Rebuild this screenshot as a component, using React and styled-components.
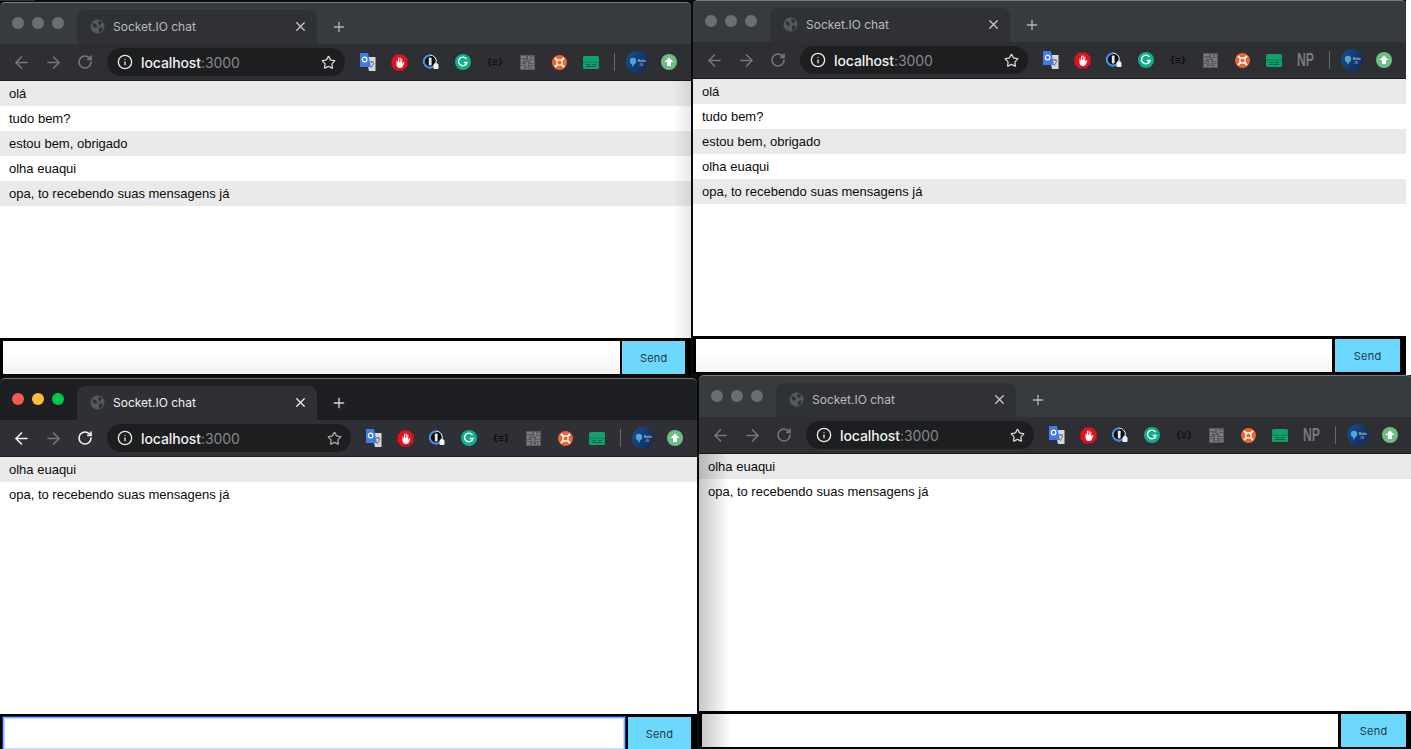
import React from "react";
import styled, { createGlobalStyle } from "styled-components";
import { ArrowLeft, ArrowRight, RotateCw, Info, Star, Plus, X } from "lucide-react";

const Global = createGlobalStyle`
  html, body { margin: 0; padding: 0; background: #0b0b0b; overflow: hidden; }
  * { box-sizing: border-box; }
`;

const Desktop = styled.div`
  position: relative;
  width: 1411px;
  height: 749px;
  overflow: hidden;
  background: #0b0b0b;
  font-family: "Liberation Sans", Arial, sans-serif;
`;

const Speck = styled.div`
  position: absolute;
  left: 0;
  top: 0;
  width: 35px;
  height: 1px;
  background: #333;
`;

const Gutter = styled.div`
  position: absolute;
  right: 0;
  top: 0;
  width: 5px;
  height: 375px;
  background: #fff;
`;

const Frame = styled.section`
  position: absolute;
  left: ${(p) => p.$x}px;
  top: ${(p) => p.$y}px;
  width: ${(p) => p.$w}px;
  display: flex;
  flex-direction: column;
`;

const TabBar = styled.header`
  height: 42px;
  display: flex;
  align-items: flex-end;
  padding-left: 77px;
  position: relative;
  border-radius: 5px 5px 0 0;
  border-top: 1px solid ${(p) => (p.$active ? "#6d6e70" : "#77797b")};
  background: ${(p) => (p.$active ? "#1e1f22" : "#383b3e")};
`;

const Lights = styled.div`
  position: absolute;
  left: 12px;
  top: 14px;
  display: flex;
  gap: 8px;
`;

const Light = styled.span`
  width: 12px;
  height: 12px;
  border-radius: 50%;
  background: ${(p) => p.$color};
`;

const Tab = styled.div`
  width: 240px;
  height: 34px;
  display: flex;
  align-items: center;
  padding: 0 9px 2px 13px;
  border-radius: 8px 8px 0 0;
  background: ${(p) => (p.$active ? "#2e3035" : "#2f3134")};
`;

const TabTitle = styled.span`
  flex: 1;
  margin-left: 8px;
  font-family: Inter, "Liberation Sans", sans-serif;
  font-size: 12px;
  white-space: nowrap;
  color: ${(p) => (p.$active ? "#f1f2f3" : "#b9bbbd")};
`;

const NewTab = styled.div`
  width: 44px;
  height: 34px;
  display: flex;
  align-items: center;
  justify-content: center;
  color: ${(p) => (p.$active ? "#d5d6d7" : "#b0b2b4")};
`;

const Toolbar = styled.div`
  height: 37px;
  display: flex;
  align-items: center;
  padding: 0 6px 0 5px;
  background: ${(p) => (p.$active ? "#2e3035" : "#2d2f32")};
  border-bottom: 1px solid #17181a;
`;

const NavButton = styled.div`
  width: 32px;
  height: 28px;
  display: flex;
  align-items: center;
  justify-content: center;
  color: ${(p) => p.$color};
`;

const Omnibox = styled.div`
  flex: 1;
  height: 28px;
  margin: 0 6px 0 6px;
  padding: 0 9px 0 10px;
  border-radius: 14px;
  display: flex;
  align-items: center;
  background: #1d1e20;
  color: #e8e9ea;
`;

const Url = styled.span`
  flex: 1;
  margin-left: 8px;
  font-family: Inter, "Liberation Sans", sans-serif;
  font-size: 14px;
  font-weight: 500;
  color: #f0f1f2;
  white-space: nowrap;
  letter-spacing: -0.1px;
`;

const Port = styled.span`
  font-weight: 400;
  color: #85878a;
`;

const Extensions = styled.div`
  display: flex;
  align-items: center;
`;

const Ext = styled.div`
  width: 32px;
  height: 28px;
  display: flex;
  align-items: center;
  justify-content: center;
`;

const Divider = styled.div`
  width: 14px;
  height: 18px;
  display: flex;
  justify-content: center;
  &::before {
    content: "";
    width: 1px;
    height: 100%;
    background: #66686b;
  }
`;

const BraceText = styled.span`
  font-family: "DejaVu Sans Mono", monospace;
  font-size: 9px;
  font-weight: 700;
  color: #0c0c0c;
`;

const NpText = styled.span`
  font-family: "Liberation Sans", sans-serif;
  font-size: 18px;
  font-weight: 700;
  color: #77797b;
  transform: scaleX(0.68);
`;

const Messages = styled.ul`
  list-style: none;
  margin: 0;
  padding: 0;
  height: 257px;
  background: #fff;
  position: relative;
  &::after {
    content: "";
    position: absolute;
    inset: 0;
    pointer-events: none;
    background: ${(p) => p.$shade || "none"};
  }
`;

const Message = styled.li`
  height: 25px;
  padding: 0 9px;
  display: flex;
  align-items: center;
  font-size: 13px;
  color: #0a0a0a;
  &:nth-child(odd) {
    background: #eaeaea;
  }
`;

const Form = styled.form`
  height: 37px;
  flex-shrink: 0;
  display: flex;
  padding: 3px 3px 1px;
  background: #000;
  position: relative;
`;

const Input = styled.div`
  width: 90%;
  margin-right: 0.4%;
  background: ${(p) => p.$shade || "#fff"};
  ${(p) =>
    p.$focused
      ? "box-shadow: 0 0 0 1px #0a3f9e, inset 0 0 0 1px #86aeee, inset 0 0 0 2px #c8dbfa;"
      : ""}
`;

const Send = styled.button`
  width: 9.2%;
  border: 0;
  padding: 0;
  background: #6cd8fe;
  color: #1c3a48;
  font-family: Inter, "Liberation Sans", sans-serif;
  font-size: 11px;
  letter-spacing: 0.2px;
`;

const Translate = () => (
  <svg width="17" height="18" viewBox="0 0 17 18">
    <path d="M7 4h9.5v14H10z" fill="#d6d8da" />
    <path d="M11 9h4M13 8v2M12 15l3-5" stroke="#6a6c6f" strokeWidth="1" fill="none" />
    <path d="M1 0h8l3 14H1z" fill="#3f7be8" />
    <circle cx="5.600" cy="6.500" r="2.300" fill="none" stroke="#fff" strokeWidth="1.200" />
  </svg>
);

const Hand = () => (
  <svg width="17" height="17" viewBox="0 0 17 17">
    <path d="M5 .5h7L16.500 5v7L12 16.500H5L.5 12V5z" fill="#e4101d" />
    <path
      d="M5.500 6.500v4c0 2 1.200 3.500 3.500 3.500 2 0 2.800-1.300 3.500-3l1-2.500-1-.4-1.200 1.900V4.800h-1v3.200h-.6V3.500h-1.100V8h-.6V3.800H7V8.500h-.6V6.500z"
      fill="#fff"
    />
  </svg>
);

const OnePassword = () => (
  <svg width="18" height="18" viewBox="0 0 18 18">
    <circle cx="8" cy="8.500" r="6.400" fill="#0b0b0b" stroke="#fff" strokeWidth="1" />
    <path d="M8 2.500a6 6 0 1 0 6 6" fill="none" stroke="#3f8bf0" strokeWidth="1.800" />
    <rect x="6.800" y="4.500" width="2.800" height="8" rx="1" fill="#e8e8e8" />
    <rect x="11.500" y="11" width="5" height="5" rx="1" fill="#f2f2f2" />
    <path d="M12.500 11.500a1.500 1.500 0 0 1 3 0" fill="none" stroke="#f2f2f2" strokeWidth="1" />
  </svg>
);

const Grammarly = () => (
  <svg width="16" height="16" viewBox="0 0 16 16">
    <circle cx="8" cy="8" r="8" fill="#0fae8c" />
    <path d="M11.500 5.200A4.300 4.300 0 1 0 12 8.500H8.800" fill="none" stroke="#fff" strokeWidth="1.400" />
  </svg>
);

const QrNoise = () => {
  const cells = [
    [1, 1, 5, 2], [8, 1, 2, 4], [11, 2, 3, 2], [1, 4, 2, 4], [4, 5, 3, 1],
    [10, 5, 4, 3], [1, 9, 4, 1], [6, 7, 2, 5], [9, 9, 5, 1], [1, 11, 3, 3],
    [5, 13, 4, 1], [10, 11, 1, 3], [12, 11, 2, 3],
  ];
  return (
    <svg width="15" height="15" viewBox="0 0 15 15">
      <rect width="15" height="15" fill="#595a5c" />
      {cells.map(([x, y, w, h]) => (
        <rect key={`${x}-${y}`} x={x} y={y} width={w} height={h} fill="#7b7c7e" />
      ))}
    </svg>
  );
};

const Lifebuoy = () => (
  <svg width="15" height="15" viewBox="0 0 15 15">
    <circle cx="7.500" cy="7.500" r="7.500" fill="#f1642c" />
    <circle cx="7.500" cy="7.500" r="2.700" fill="#f1642c" stroke="#fff" strokeWidth="1.200" />
    <path d="M3 3l2.400 2.400M12 3L9.600 5.400M3 12l2.400-2.400M12 12L9.600 9.600" stroke="#fff" strokeWidth="2" />
  </svg>
);

const GreenCard = () => (
  <svg width="16" height="13" viewBox="0 0 16 13">
    <rect width="16" height="13" rx="1.500" fill="#0fa06b" />
    <path d="M0 6.200h16" stroke="#067a4d" strokeWidth="0.800" />
    <path d="M3 8.500h4M9 8.500h4M3 10.500h10" stroke="#06663f" strokeWidth="1" />
  </svg>
);

const Kalo = () => (
  <svg width="22" height="22" viewBox="0 0 22 22">
    <defs>
      <linearGradient id="kaloFill" x1="0" y1="0.300" x2="1" y2="0.800">
        <stop offset="0" stopColor="#124d86" />
        <stop offset="1" stopColor="#14295a" />
      </linearGradient>
    </defs>
    <circle cx="11" cy="11" r="11" fill="url(#kaloFill)" />
    <circle cx="7" cy="10" r="3.200" fill="#4fa6d6" />
    <path d="M5.500 12.500L7 16l1.500-3.500z" fill="#4fa6d6" />
    <text x="12" y="10.500" fontSize="3.600" fontFamily="Liberation Sans" fontWeight="700" fill="#a9c8e2">
      Kalo
    </text>
    <text x="13" y="14.500" fontSize="3.600" fontFamily="Liberation Sans" fill="#a9c8e2">
      JS
    </text>
  </svg>
);

const UpArrow = () => (
  <svg width="16" height="16" viewBox="0 0 16 16">
    <circle cx="8" cy="8" r="8" fill="#6fbd86" />
    <path d="M8 3.500L12.500 8H10v4H6V8H3.500z" fill="#fff" />
  </svg>
);

const TabGlobe = () => (
  <svg width="15" height="15" viewBox="0 0 15 15">
    <circle cx="7.500" cy="7.500" r="7" fill="#55585c" />
    <path d="M2 4l4 1 1 3-2.500 1L3 7zM9 1.500l3.500 2L10 6.500 8 4zM9 9l4-.5-1.500 4-2.500 1z" fill="#2f3134" />
  </svg>
);

const plainIcons = [
  <Translate />, <Hand />, <OnePassword />, <Grammarly />,
  <BraceText>{"{≡}"}</BraceText>, <QrNoise />, <Lifebuoy />, <GreenCard />,
];

function ChromeWindow({ x, y, w, active, np, messages, shade, inputShade }) {
  const idle = "#75777a";
  return (
    <Frame $x={x} $y={y} $w={w}>
      <TabBar $active={active}>
        <Lights>
          <Light $color={active ? "#fc5753" : "#6b6e70"} />
          <Light $color={active ? "#fdbc40" : "#6b6e70"} />
          <Light $color={active ? "#02c94b" : "#6b6e70"} />
        </Lights>
        <Tab $active={active}>
          <TabGlobe />
          <TabTitle $active={active}>Socket.IO chat</TabTitle>
          <X size={15} color={active ? "#f1f2f3" : "#c9cbcd"} />
        </Tab>
        <NewTab $active={active}>
          <Plus size={16} />
        </NewTab>
      </TabBar>
      <Toolbar $active={active}>
        <NavButton $color={active ? "#f1f2f3" : idle}>
          <ArrowLeft size={19} />
        </NavButton>
        <NavButton $color={idle}>
          <ArrowRight size={19} />
        </NavButton>
        <NavButton $color={active ? "#f1f2f3" : idle}>
          <RotateCw size={16} strokeWidth={2.400} />
        </NavButton>
        <Omnibox>
          <Info size={16} />
          <Url>
            localhost<Port>:3000</Port>
          </Url>
          <Star size={15} color={active ? "#a9abad" : "#d8d9da"} />
        </Omnibox>
        <Extensions>
          {plainIcons.map((icon, i) => (
            <Ext key={i}>{icon}</Ext>
          ))}
          {np && (
            <Ext>
              <NpText>NP</NpText>
            </Ext>
          )}
          <Divider />
          <Ext>
            <Kalo />
          </Ext>
          <Ext>
            <UpArrow />
          </Ext>
        </Extensions>
      </Toolbar>
      <Messages $shade={shade}>
        {messages.map((m) => (
          <Message key={m}>{m}</Message>
        ))}
      </Messages>
      <Form>
        <Input $focused={active} $shade={inputShade} />
        <Send type="button">Send</Send>
      </Form>
    </Frame>
  );
}

const full = [
  "olá",
  "tudo bem?",
  "estou bem, obrigado",
  "olha euaqui",
  "opa, to recebendo suas mensagens já",
];
const short = ["olha euaqui", "opa, to recebendo suas mensagens já"];

export default function App() {
  return (
    <Desktop>
      <Global />
      <Speck />
      <Gutter />
      <ChromeWindow
        x={0}
        y={2}
        w={691}
        messages={full}
        shade="linear-gradient(to left, rgba(0,0,0,0.09), rgba(0,0,0,0) 18px)"
        inputShade="linear-gradient(to bottom, #fff 40%, #f1f1f1)"
      />
      <ChromeWindow
        x={693}
        y={0}
        w={713}
        np
        messages={full}
        inputShade="linear-gradient(to bottom, #fff 40%, #f4f4f4)"
      />
      <ChromeWindow x={0} y={378} w={697} active messages={short} />
      <ChromeWindow
        x={699}
        y={375}
        w={713}
        np
        messages={short}
        shade="linear-gradient(to right, rgba(0,0,0,0.22), rgba(0,0,0,0) 30px)"
        inputShade="linear-gradient(to right, #c8c8c8, #fff 30px)"
      />
    </Desktop>
  );
}
